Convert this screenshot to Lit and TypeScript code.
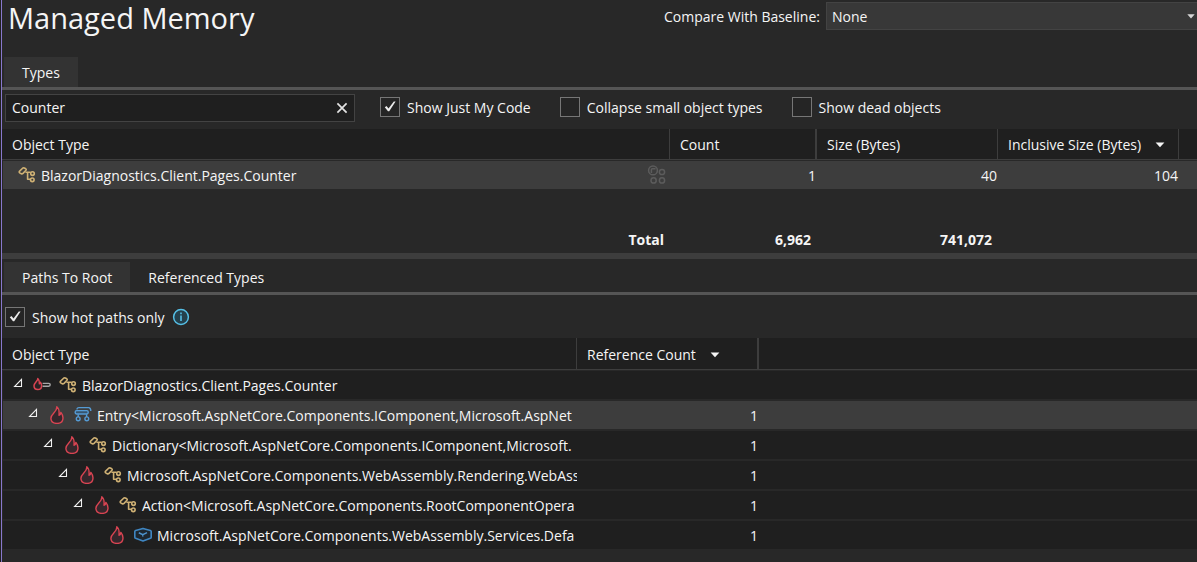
import { LitElement, html, css, svg, nothing } from "lit";
import { customElement, property, state } from "lit/decorators.js";
import { classMap } from "lit/directives/class-map.js";

type IconName = "class" | "struct" | "module" | "flame" | "hotroot" | "info" | "instances" | "expander" | "sort" | "close";

const icons: Record<IconName, { w: number; h: number; body: unknown }> = {
  class: {
    w: 18, h: 18,
    body: svg`<g fill="none" stroke="#cfb174" stroke-width="1.6" stroke-linejoin="round">
      <path d="M1.4 5.4 L4.6 2.2 Q5.4 1.6 6.3 2 L7.8 2.8 Q8.5 3.4 8 4.2 L5 7.4 Q4.2 8.2 3.3 7.8 L1.7 6.9 Q.9 6.2 1.4 5.4Z"/>
      <path d="M7.4 6.2H12.6M9.6 6.4V13.2H12.4"/>
      <circle cx="14.5" cy="7.6" r="1.8"/><circle cx="14.3" cy="13.8" r="1.8"/></g>`,
  },
  struct: {
    w: 18, h: 18,
    body: svg`<g fill="none" stroke="#559bd4" stroke-width="1.4">
      <path d="M3 3.4 Q3 1.6 5 1.6H14.6Q16.8 1.6 16.8 5"/>
      <rect x="1.2" y="4.6" width="13" height="3.4" rx="1.4" fill="#36546e"/>
      <path d="M4.2 8.2V11M12.6 8.2V11"/>
      <circle cx="4.2" cy="12.8" r="1.9"/><circle cx="12.8" cy="12.8" r="1.9"/></g>`,
  },
  module: {
    w: 18, h: 18,
    body: svg`<path d="M9 2.4L16.4 4.4Q17.2 4.7 17.2 5.5V11.2Q17.2 12 16.4 12.3L9 15L1.6 12.3Q.8 12 .8 11.2V5.5Q.8 4.7 1.6 4.4Z" fill="#1d2730" stroke="#3f86c2" stroke-width="1.6" stroke-linejoin="round"/>
      <path d="M4.8 6.8L8.8 8.6L13 6.6M8.8 8.6V10.6" fill="none" stroke="#4d94cf" stroke-width="1.5"/>`,
  },
  flame: {
    w: 18, h: 18,
    body: svg`<path d="M8.8 .8C9 3.2 7.8 4.9 5.8 7C4 8.9 2.9 10.4 2.9 12.3C2.9 15.6 5.5 17.4 9 17.4C12.5 17.4 15 15.4 15 12C15 9.7 14.2 8 12.9 6.4C12.7 8 12.2 9 11 9.4C11.4 5.8 11 2.6 8.8 .8Z" fill="#35272c" stroke="#d94452" stroke-width="1.4" stroke-linejoin="round"/>`,
  },
  hotroot: {
    w: 18, h: 18,
    body: svg`<path d="M4.8 2.6C5 5 1.2 6.6 1 9.8C1 12.4 2.7 13.6 4.8 13.6C7 13.6 8.6 12.2 8.6 9.7C8.6 8.2 8.1 7 7.4 6.2C7.2 7.2 7 7.6 6.4 7.8C6.6 5.6 6.2 3.8 4.8 2.6Z" fill="#2a2124" stroke="#d94452" stroke-width="1.5" stroke-linejoin="round"/>
      <path d="M9.6 7.4H15.8Q17.2 7.4 17.2 8.8Q17.2 10.2 15.8 10.2H9.6" fill="none" stroke="#a8a8a8" stroke-width="1.4"/>`,
  },
  info: {
    w: 18, h: 18,
    body: svg`<circle cx="9" cy="9" r="7.4" fill="#24404c" stroke="#55bfe6" stroke-width="1.5"/>
      <path d="M9 7.6V13M9 4.6V6.2" stroke="#55bfe6" stroke-width="1.6"/>`,
  },
  instances: {
    w: 20, h: 20,
    body: svg`<g fill="none" stroke="#5c5c5c" stroke-width="1.5"><circle cx="6" cy="5.4" r="4.4"/><path d="M4.4 8V4.6Q4.4 3.8 5.4 3.8H8.6"/>
      <circle cx="15" cy="7" r="2.6"/><circle cx="6.6" cy="15.4" r="2.6"/><circle cx="15" cy="15.4" r="2.6"/></g>`,
  },
  expander: { w: 10, h: 10, body: svg`<path d="M8.5 1.4V8.5H1.6Z" fill="none" stroke="#f1f1f1" stroke-width="1.1"/>` },
  sort: { w: 10, h: 6, body: svg`<path d="M.6 .5H9.4L5 5.2Z" fill="#f5f5f5"/>` },
  close: { w: 12, h: 12, body: svg`<path d="M1.4 1.4L10.6 10.6M10.6 1.4L1.4 10.6" stroke="#e4e4e4" stroke-width="1.7"/>` },
};

const icon = (name: IconName) => {
  const { w, h, body } = icons[name];
  return html`<svg class="icon" width=${w} height=${h} viewBox="0 0 ${w} ${h}" aria-hidden="true">${body}</svg>`;
};

const shared = css`
  :host {
    font-family: "Open Sans", "Noto Sans", sans-serif;
    font-size: 14px;
    line-height: 20px;
    color: #f5f5f5;
  }
  * { box-sizing: border-box; }
  .icon { display: block; flex: none; }
  button {
    background: none;
    border: 0;
    padding: 0;
    color: inherit;
    font: inherit;
    text-align: left;
  }
`;

@customElement("check-option")
class CheckOption extends LitElement {
  @property() label = "";
  @property({ type: Boolean }) checked = false;

  static styles = [shared, css`
    :host { display: block; }
    .option { display: flex; align-items: center; gap: 7px; white-space: nowrap; }
    .text { padding-top: 2px; }
    .mark { display: grid; width: 20px; height: 20px; }
    .box, .tick { grid-area: 1 / 1; }
    .box {
      appearance: none;
      width: 20px;
      height: 20px;
      margin: 0;
      border: 1px solid #767676;
      background: #252525;
    }
    .tick { pointer-events: none; }
  `];

  render() {
    return html`<label class="option">
      <span class="mark">
        <input class="box" type="checkbox" .checked=${this.checked}
          @change=${(e: Event) => (this.checked = (e.target as HTMLInputElement).checked)} />
        ${this.checked
          ? html`<svg class="tick" width="20" height="20" viewBox="0 0 20 20" aria-hidden="true">
              <path d="M4.8 10.2L6.5 9L8.5 11.6L13.8 4.4L15.6 4.4L9.2 14.2H8Z" fill="#ececec" /></svg>`
          : nothing}
      </span><span class="text">${this.label}</span></label>`;
  }
}

interface PathNode { depth: number; hot: IconName; kind: IconName; name: string; count: string; leaf?: boolean; }

const paths: PathNode[] = [
  { depth: 0, hot: "hotroot", kind: "class", name: "BlazorDiagnostics.Client.Pages.Counter", count: "" },
  { depth: 1, hot: "flame", kind: "struct", name: "Entry<Microsoft.AspNetCore.Components.IComponent,Microsoft.AspNet", count: "1" },
  { depth: 2, hot: "flame", kind: "class", name: "Dictionary<Microsoft.AspNetCore.Components.IComponent,Microsoft.", count: "1" },
  { depth: 3, hot: "flame", kind: "class", name: "Microsoft.AspNetCore.Components.WebAssembly.Rendering.WebAss", count: "1" },
  { depth: 4, hot: "flame", kind: "class", name: "Action<Microsoft.AspNetCore.Components.RootComponentOpera", count: "1" },
  { depth: 5, hot: "flame", kind: "module", name: "Microsoft.AspNetCore.Components.WebAssembly.Services.Defa", count: "1", leaf: true },
];

@customElement("app-root")
class AppRoot extends LitElement {
  @state() private filter = "Counter";
  @state() private selected = 1;

  static styles = [shared, css`
    :host { display: block; background: #1f1f1f; padding-left: 1px; }
    .page {
      min-height: 100vh;
      border-left: 1px solid #8878cc;
      background: #282828;
      overflow: hidden;
    }
    .top { display: flex; align-items: flex-start; justify-content: space-between; height: 57px; }
    h1 { margin: 0; padding-left: 6px; font-size: 29px; line-height: 36px; font-weight: 400; white-space: nowrap; }
    .baseline { display: flex; align-items: center; gap: 6px; padding-top: 2px; white-space: nowrap; }
    .baseline label { padding-top: 2px; }
    .combo { display: grid; width: 31vw; align-items: center; }
    .combo select {
      grid-area: 1 / 1;
      appearance: none;
      height: 28px;
      padding: 2px 5px 0;
      border: 1px solid #434343;
      border-right: 0;
      border-radius: 0;
      background: #383838;
      color: inherit;
      font: inherit;
    }
    .combo svg { grid-area: 1 / 1; justify-self: end; margin-right: 2px; pointer-events: none; }
    .tabs { display: flex; padding-left: 2px; border-bottom: 3px solid #555; }
    .tab { height: 30px; padding: 2px 18px 0; }
    .tab.active { background: #333; }
    .filters { display: flex; align-items: flex-start; height: 39px; padding: 4px 0 0 3px; gap: 25px; }
    .options { display: flex; gap: 29px; padding-top: 2px; }
    .search { display: flex; align-items: center; width: 350px; height: 28px; border: 1px solid #434343; background: #1f1f1f; }
    .search input {
      flex: 1;
      min-width: 0;
      padding: 0 6px;
      border: 0;
      outline: 0;
      background: none;
      color: inherit;
      font: inherit;
    }
    .search button { padding: 6px; }
    table { width: 100%; table-layout: fixed; border-collapse: separate; border-spacing: 0; }
    th, td { padding: 0; white-space: nowrap; overflow: hidden; }
    thead th {
      height: 31px;
      padding: 2px 0 0 10px;
      border-bottom: 1px solid #3d3d3d;
      border-right: 1px solid #3d3d3d;
      background: #1f1f1f;
      font-weight: 400;
      text-align: left;
    }
    .paths thead th { height: 32px; }
    thead th.wide { border-right-width: 2px; }
    thead th:last-child { border-right: 0; }
    .sorted { display: flex; align-items: center; gap: 14px; }
    tbody td { height: 30px; border: 0 solid #282828; border-width: 1px 0; }
    tbody td:first-child { border-left-width: 1px; }
    .paths tbody td { background: #1f1f1f; }
    tbody tr.selected td { background: #3d3d3d; }
    tbody td.num { padding: 2px 1px 0 0; text-align: right; }
    .type { display: flex; align-items: center; padding: 0 3px 0 15px; gap: 5px; }
    .name { padding-top: 2px; }
    .type .name { flex: 1; }
    tfoot td { height: 63px; padding: 0 6px 3px 0; font-weight: 700; text-align: right; vertical-align: bottom; }
    .splitter { height: 6px; margin-bottom: 3px; background: #3d3d3d; }
    .hot { display: flex; align-items: center; gap: 7px; height: 43px; padding: 1px 3px 0; }
    .node { display: flex; align-items: center; padding-left: 10px; overflow: hidden; }
    .indent { flex: none; }
    .expander { display: flex; align-items: flex-start; width: 20px; height: 18px; flex: none; padding-top: 2px; }
    .kind { padding: 0 5px 0 8px; }
    .c-count { width: 147px; }
    .c-size { width: 181px; }
    .c-end { width: 18px; }
    .c-path { width: 575px; }
    .c-ref { width: 182px; }
  `];

  private typesTable() {
    return html`<table>
      <colgroup><col /><col class="c-count" /><col class="c-size" /><col class="c-size" /><col class="c-end" /></colgroup>
      <thead><tr>
        <th scope="col">Object Type</th>
        <th scope="col" class="wide">Count</th>
        <th scope="col">Size (Bytes)</th>
        <th scope="col" aria-sort="descending"><span class="sorted">Inclusive Size (Bytes) ${icon("sort")}</span></th>
        <th></th>
      </tr></thead>
      <tbody><tr class="selected">
        <td><div class="type">${icon("class")}<span class="name">BlazorDiagnostics.Client.Pages.Counter</span>
          <button aria-label="View instances">${icon("instances")}</button></div></td>
        <td class="num">1</td><td class="num">40</td><td class="num">104</td><td></td>
      </tr></tbody>
      <tfoot><tr><td>Total</td><td>6,962</td><td>741,072</td><td></td><td></td></tr></tfoot>
    </table>`;
  }

  private pathsTable() {
    return html`<table class="paths">
      <colgroup><col class="c-path" /><col class="c-ref" /><col /></colgroup>
      <thead><tr>
        <th scope="col">Object Type</th>
        <th scope="col" class="wide" aria-sort="descending"><span class="sorted">Reference Count ${icon("sort")}</span></th>
        <th></th>
      </tr></thead>
      <tbody>${paths.map((n, i) => html`<tr class=${classMap({ selected: i === this.selected })} @click=${() => (this.selected = i)}>
        <td><div class="node">
          <span class="indent" style="width:${n.depth * 15}px"></span>
          ${n.leaf ? html`<span class="expander"></span>` : html`<button class="expander" aria-label="Collapse">${icon("expander")}</button>`}
          ${icon(n.hot)}<span class="kind">${icon(n.kind)}</span><span class="name">${n.name}</span>
        </div></td>
        <td class="num">${n.count}</td><td></td>
      </tr>`)}</tbody>
    </table>`;
  }

  render() {
    return html`<main class="page">
      <header class="top">
        <h1>Managed Memory</h1>
        <div class="baseline">
          <label for="baseline">Compare With Baseline:</label>
          <span class="combo">
            <select id="baseline"><option>None</option></select>
            <svg width="8" height="5" viewBox="0 0 8 5" aria-hidden="true"><path d="M.3 .3H7.7L4 4.6Z" fill="#d6d6d6" /></svg>
          </span>
        </div>
      </header>
      <div class="tabs" role="tablist"><button class="tab active" role="tab" aria-selected="true">Types</button></div>
      <div class="filters">
        <div class="search">
          <input type="text" aria-label="Filter types" .value=${this.filter}
            @input=${(e: Event) => (this.filter = (e.target as HTMLInputElement).value)} />
          <button aria-label="Clear" @click=${() => (this.filter = "")}>${icon("close")}</button>
        </div>
        <div class="options">
          <check-option label="Show Just My Code" checked></check-option>
          <check-option label="Collapse small object types"></check-option>
          <check-option label="Show dead objects"></check-option>
        </div>
      </div>
      ${this.typesTable()}
      <div class="splitter"></div>
      <div class="tabs" role="tablist">
        <button class="tab active" role="tab" aria-selected="true">Paths To Root</button>
        <button class="tab" role="tab" aria-selected="false">Referenced Types</button>
      </div>
      <div class="hot"><check-option label="Show hot paths only" checked></check-option>${icon("info")}</div>
      ${this.pathsTable()}
    </main>`;
  }
}
